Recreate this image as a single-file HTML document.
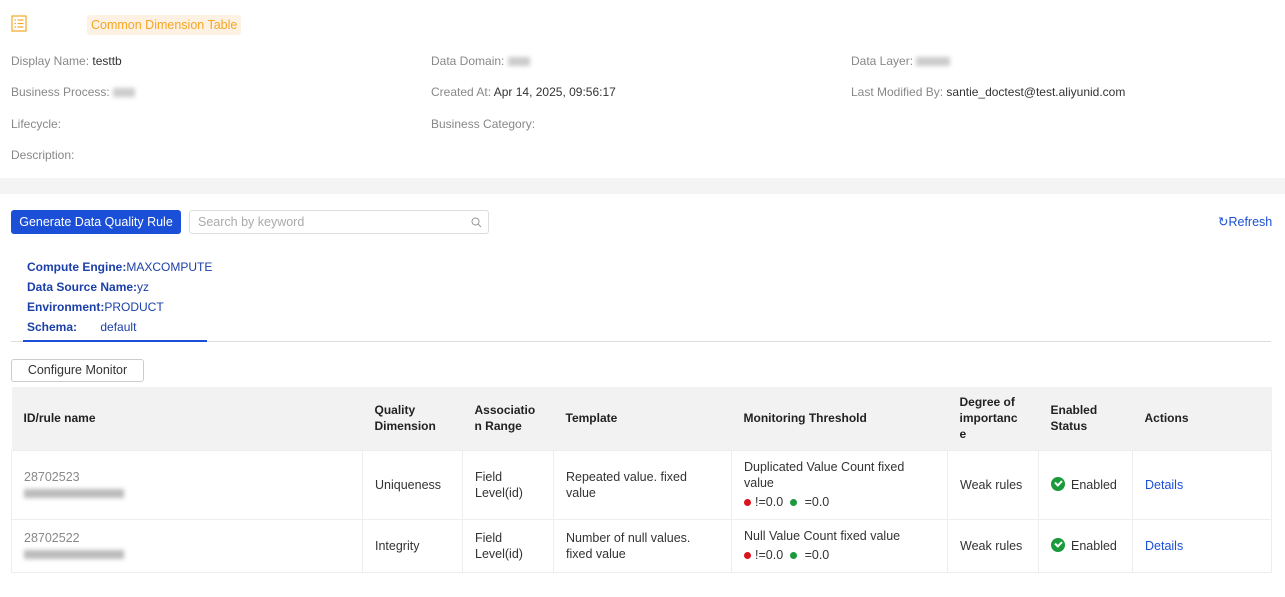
<!DOCTYPE html>
<html><head><meta charset="utf-8"><style>
*{margin:0;padding:0;box-sizing:border-box}
body{width:1285px;height:597px;background:#fff;font-family:"Liberation Sans","Noto Sans CJK SC",sans-serif;font-size:12px;color:#333;position:relative;overflow:hidden}
.a{position:absolute;white-space:nowrap}
.l{color:#888}
.blur{display:inline-block;background:#ccc;filter:blur(2px);height:9px;vertical-align:middle}
table{position:absolute;left:11px;top:387px;border-collapse:collapse;width:1260px;table-layout:fixed}
th{background:#f2f2f2;text-align:left;font-weight:bold;font-size:12px;color:#222;padding:0 12px;height:63px;line-height:16px}
td{border:1px solid #eee;padding:0 12px;font-size:12.5px;line-height:16px;color:#333;vertical-align:middle}
.dot{display:inline-block;width:7px;height:7px;border-radius:50%;margin-right:4px;vertical-align:0}
.chk{display:inline-block;width:14px;height:14px;border-radius:50%;background:#1a9a3a;vertical-align:-2px;margin-right:6px;position:relative}
.chk:after{content:"";position:absolute;left:4px;top:3px;width:5px;height:3px;border-left:2px solid #fff;border-bottom:2px solid #fff;transform:rotate(-45deg)}
a{color:#1b4fd8;text-decoration:none}
.th{display:inline-block;margin-top:3px}
</style></head><body>
<svg class="a" style="left:11px;top:15px" width="16" height="17" viewBox="0 0 16 17"><rect x="1" y="1" width="14" height="15" fill="none" stroke="#f5a623" stroke-width="1.2"/><g stroke="#f5a623" stroke-width="1.2"><line x1="3.5" y1="5" x2="5" y2="5"/><line x1="6.5" y1="5" x2="12.5" y2="5"/><line x1="3.5" y1="8.5" x2="5" y2="8.5"/><line x1="6.5" y1="8.5" x2="12.5" y2="8.5"/><line x1="3.5" y1="12" x2="5" y2="12"/><line x1="6.5" y1="12" x2="12.5" y2="12"/></g></svg>
<div class="a" style="left:87px;top:15px;height:20px;padding:0 4px;background:#fdf1e3;border-radius:3px;color:#f5a623;line-height:20px;font-size:12.5px">Common Dimension Table</div>
<div class="a" style="left:11px;top:54px"><span class="l">Display Name: </span>testtb</div>
<div class="a" style="left:11px;top:85px"><span class="l">Business Process: </span><span class="blur" style="width:22px"></span></div>
<div class="a" style="left:11px;top:117px"><span class="l">Lifecycle:</span></div>
<div class="a" style="left:11px;top:148px"><span class="l">Description:</span></div>
<div class="a" style="left:431px;top:54px"><span class="l">Data Domain: </span><span class="blur" style="width:22px"></span></div>
<div class="a" style="left:431px;top:85px"><span class="l">Created At: </span>Apr 14, 2025, 09:56:17</div>
<div class="a" style="left:431px;top:117px"><span class="l">Business Category:</span></div>
<div class="a" style="left:851px;top:54px"><span class="l">Data Layer: </span><span class="blur" style="width:34px"></span></div>
<div class="a" style="left:851px;top:85px"><span class="l">Last Modified By: </span>santie_doctest@test.aliyunid.com</div>
<div class="a" style="left:0;top:178px;width:1285px;height:16px;background:#f4f4f4"></div>
<div class="a" style="left:11px;top:210px;width:170px;height:24px;background:#1b4fd8;border-radius:3px;color:#fff;text-align:center;line-height:24px;font-size:12.5px">Generate Data Quality Rule</div>
<div class="a" style="left:189px;top:210px;width:300px;height:24px;border:1px solid #ddd;border-radius:3px;color:#aaa;line-height:22px;padding-left:8px;font-size:12.5px">Search by keyword
<svg style="position:absolute;right:6px;top:6px" width="11" height="11" viewBox="0 0 11 11"><circle cx="4.5" cy="4.5" r="3.5" fill="none" stroke="#999"/><line x1="7" y1="7" x2="10" y2="10" stroke="#999"/></svg></div>
<div class="a" style="left:1218px;top:214px;color:#1b4fd8;font-size:12.5px">↻Refresh</div>
<div class="a" style="left:27px;top:257px;color:#1b3fa8;line-height:20px;font-size:12px"><b>Compute Engine:</b>MAXCOMPUTE<br><b>Data Source Name:</b>yz<br><b>Environment:</b>PRODUCT<br><b>Schema:</b>&nbsp;&nbsp;&nbsp;&nbsp;&nbsp;&nbsp;&nbsp;default</div>
<div class="a" style="left:11px;top:341px;width:1260px;height:1px;background:#ddd"></div>
<div class="a" style="left:23px;top:340px;width:184px;height:2px;background:#1b4fd8"></div>
<div class="a" style="left:11px;top:359px;width:133px;height:23px;border:1px solid #ccc;border-radius:3px;text-align:center;line-height:21px;font-size:12.5px">Configure Monitor</div>
<table>
<colgroup><col style="width:351px"><col style="width:100px"><col style="width:91px"><col style="width:178px"><col style="width:216px"><col style="width:91px"><col style="width:94px"><col style="width:139px"></colgroup>
<tr><th>ID/rule name</th><th>Quality Dimension</th><th>Associatio n Range</th><th>Template</th><th>Monitoring Threshold</th><th>Degree of importanc e</th><th>Enabled Status</th><th>Actions</th></tr>
<tr style="height:69px"><td><span style="color:#888">28702523</span><br><span class="blur" style="width:100px;background:#bbb"></span></td><td>Uniqueness</td><td>Field Level(id)</td><td>Repeated value. fixed value</td><td>Duplicated Value Count fixed value<br><span class="th"><span class="dot" style="background:#d9141e"></span>!=0.0 &nbsp;<span class="dot" style="background:#1a9a3a"></span> =0.0</span></td><td>Weak rules</td><td><span class="chk"></span>Enabled</td><td><a>Details</a></td></tr>
<tr style="height:53px"><td><span style="color:#888">28702522</span><br><span class="blur" style="width:100px;background:#bbb"></span></td><td>Integrity</td><td>Field Level(id)</td><td>Number of null values. fixed value</td><td>Null Value Count fixed value<br><span class="th"><span class="dot" style="background:#d9141e"></span>!=0.0 &nbsp;<span class="dot" style="background:#1a9a3a"></span> =0.0</span></td><td>Weak rules</td><td><span class="chk"></span>Enabled</td><td><a>Details</a></td></tr>
</table>
</body></html>
